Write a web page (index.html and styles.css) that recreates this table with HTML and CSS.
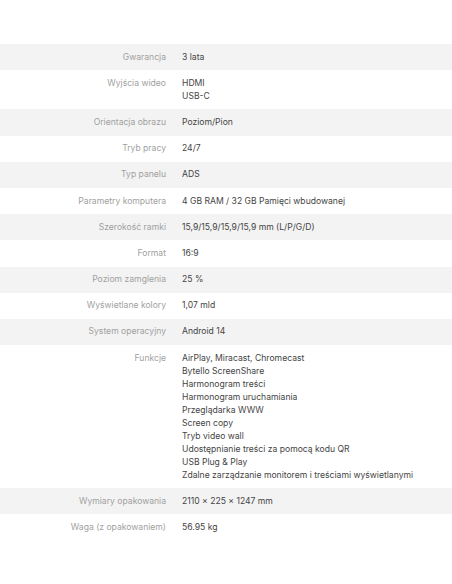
FILE: index.html
```html
<!DOCTYPE html>
<html lang="pl">
<head>
    <meta charset="UTF-8">
    <meta name="viewport" content="width=device-width, initial-scale=1.0">
    <title>Specyfikacja</title>
    <link rel="stylesheet" href="styles.css">
</head>
<body>
    <div class="specs">
        <div class="spec-row">
            <div class="spec-label">Gwarancja</div>
            <div class="spec-value">3 lata</div>
        </div>
        <div class="spec-row">
            <div class="spec-label">Wyjścia wideo</div>
            <div class="spec-value">HDMI<br>USB-C</div>
        </div>
        <div class="spec-row">
            <div class="spec-label">Orientacja obrazu</div>
            <div class="spec-value">Poziom/Pion</div>
        </div>
        <div class="spec-row">
            <div class="spec-label">Tryb pracy</div>
            <div class="spec-value">24/7</div>
        </div>
        <div class="spec-row">
            <div class="spec-label">Typ panelu</div>
            <div class="spec-value">ADS</div>
        </div>
        <div class="spec-row">
            <div class="spec-label">Parametry komputera</div>
            <div class="spec-value">4 GB RAM / 32 GB Pamięci wbudowanej</div>
        </div>
        <div class="spec-row">
            <div class="spec-label">Szerokość ramki</div>
            <div class="spec-value">15,9/15,9/15,9/15,9 mm (L/P/G/D)</div>
        </div>
        <div class="spec-row">
            <div class="spec-label">Format</div>
            <div class="spec-value">16:9</div>
        </div>
        <div class="spec-row">
            <div class="spec-label">Poziom zamglenia</div>
            <div class="spec-value">25 %</div>
        </div>
        <div class="spec-row">
            <div class="spec-label">Wyświetlane kolory</div>
            <div class="spec-value">1,07 mld</div>
        </div>
        <div class="spec-row">
            <div class="spec-label">System operacyjny</div>
            <div class="spec-value">Android 14</div>
        </div>
        <div class="spec-row">
            <div class="spec-label">Funkcje</div>
            <div class="spec-value">
                AirPlay, Miracast, Chromecast<br>
                Bytello ScreenShare<br>
                Harmonogram treści<br>
                Harmonogram uruchamiania<br>
                Przeglądarka WWW<br>
                Screen copy<br>
                Tryb video wall<br>
                Udostępnianie treści za pomocą kodu QR<br>
                USB Plug &amp; Play<br>
                Zdalne zarządzanie monitorem i treściami wyświetlanymi
            </div>
        </div>
        <div class="spec-row">
            <div class="spec-label">Wymiary opakowania</div>
            <div class="spec-value">2110 × 225 × 1247 mm</div>
        </div>
        <div class="spec-row">
            <div class="spec-label">Waga (z opakowaniem)</div>
            <div class="spec-value">56.95 kg</div>
        </div>
    </div>
</body>
</html>
```

FILE: styles.css
```css
* {
    margin: 0;
    padding: 0;
    box-sizing: border-box;
}
body {
    font-family: Inter, 'Noto Sans', sans-serif;
    font-size: 8.6px;
    line-height: 13px;
    background: #ffffff;
    padding-top: 44px;
}
.specs {
    display: flex;
    flex-direction: column;
}
.spec-row {
    display: grid;
    grid-template-columns: 166px 1fr;
    column-gap: 16px;
    padding: 6.6px 0;
}
.spec-row:nth-child(odd) {
    background: #f3f3f3;
}
.spec-label {
    text-align: right;
    color: #a0a0a0;
}
.spec-value {
    color: #444444;
}
```
